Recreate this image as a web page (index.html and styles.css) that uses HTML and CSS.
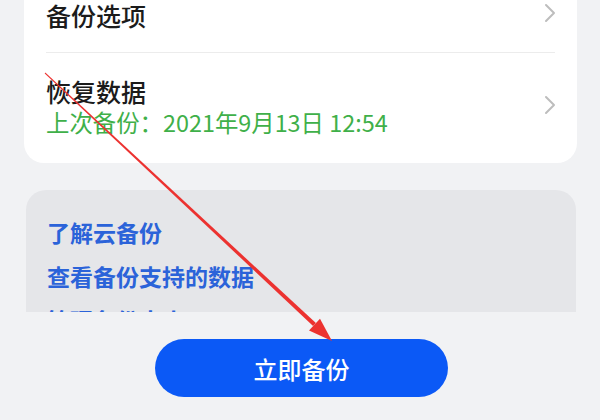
FILE: index.html
```html
<!DOCTYPE html>
<html lang="zh-CN">
<head>
<meta charset="utf-8">
<link rel="stylesheet" href="styles.css">
</head>
<body>
<div class="page">
  <div class="scroll">
    <div class="card">
      <div class="row row-first">
        <div class="title">备份选项</div>
        <svg class="chev" viewBox="0 0 12 20" width="12" height="20"><path d="M2 2 L10 10 L2 18" /></svg>
      </div>
      <div class="divider"></div>
      <div class="row row-second">
        <div class="texts">
          <div class="title">恢复数据</div>
          <div class="sub">上次备份：2021年9月13日 12:54</div>
        </div>
        <svg class="chev" viewBox="0 0 12 20" width="12" height="20"><path d="M2 2 L10 10 L2 18" /></svg>
      </div>
    </div>
    <div class="card links">
      <div class="link">了解云备份</div>
      <div class="link">查看备份支持的数据</div>
      <div class="link">管理备份大小</div>
    </div>
  </div>
  <div class="footer">
    <div class="btn">立即备份</div>
  </div>
  <svg class="arrow" viewBox="0 0 600 420" width="600" height="420">
    <polygon points="44.7,73.4 45.3,72.6 315.9,323.1 313.1,326.1" />
    <polygon points="332,341 309,330.4 320,318.8" />
  </svg>
</div>
</body>
</html>
```

FILE: styles.css
```css
html, body {
  margin: 0;
  padding: 0;
}
body {
  width: 600px;
  height: 420px;
  overflow: hidden;
  background: #f1f2f4;
  font-family: "Noto Sans CJK SC", "Noto Sans", sans-serif;
}
.page {
  position: relative;
  width: 600px;
  height: 420px;
}
.scroll {
  height: 312px;
  overflow: hidden;
  padding: 0 23px 0 24px;
  box-sizing: border-box;
}
.card {
  background: #ffffff;
  border-radius: 0 0 20px 20px;
  padding: 0 22px;
}
.row {
  display: flex;
  justify-content: space-between;
}
.row-first {
  height: 52px;
  align-items: flex-start;
}
.row-first .chev {
  margin-top: 3px;
}
.row-second {
  padding: 23px 0 25px;
  align-items: center;
}
.row-second .chev {
  margin-top: -4px;
}
.title {
  font-size: 25px;
  line-height: 30px;
  font-weight: 500;
  color: #1b1b1b;
}
.sub {
  font-size: 23.4px;
  line-height: 32px;
  font-weight: 400;
  color: #3fb049;
}
.divider {
  height: 1px;
  background: #ececec;
}
.chev {
  flex: none;
  margin-right: -1px;
}
.chev path {
  fill: none;
  stroke: #bdbdbd;
  stroke-width: 2;
  stroke-linecap: round;
  stroke-linejoin: round;
}
.links {
  margin: 27px 1px 0 2px;
  background: #e5e6e9;
  border-radius: 20px;
  padding: 20px 21px;
}
.link {
  font-size: 23px;
  line-height: 44px;
  color: #2b63d9;
  font-weight: 600;
}
.footer {
  display: flex;
  justify-content: center;
  padding-top: 27px;
}
.btn {
  width: 293px;
  height: 58px;
  margin-left: 3px;
  border-radius: 29px;
  background: #0b59f6;
  color: #ffffff;
  font-size: 24px;
  font-weight: 500;
  display: flex;
  align-items: center;
  justify-content: center;
}
.arrow {
  position: absolute;
  left: 0;
  top: 0;
  pointer-events: none;
}
.arrow polygon {
  fill: #ec3230;
}
```
